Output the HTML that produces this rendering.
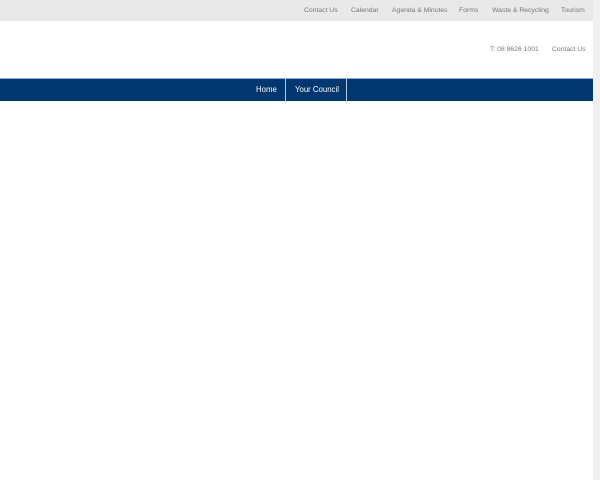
<!DOCTYPE html>
<html><head><style>
body{margin:0;width:600px;height:480px;overflow:hidden;background:#fff;font-family:"Liberation Sans",sans-serif;position:relative}
.top{position:absolute;left:0;top:0;width:593px;height:21px;background:#e9e9e9}
.t{position:absolute;top:7px;font-size:6.8px;color:#777;white-space:nowrap}
.nav{position:absolute;left:0;top:78px;width:593px;height:22px;background:#003771;border-top:1px solid #8fb0cf}
.n{position:absolute;top:6px;font-size:7.8px;color:#fff;white-space:nowrap}
.d{position:absolute;top:0;width:1px;height:22px;background:#b9cde0}
.sb{position:absolute;left:593px;top:0;width:7px;height:480px;background:#f0f0f0}
</style></head><body>
<div class="top"></div>
<div class="t" style="left:304px">Contact Us</div>
<div class="t" style="left:351px">Calendar</div>
<div class="t" style="left:392px">Agenda &amp; Minutes</div>
<div class="t" style="left:459px">Forms</div>
<div class="t" style="left:492px">Waste &amp; Recycling</div>
<div class="t" style="left:561px">Tourism</div>
<div class="t" style="left:490px;top:46px">T: 08 8626 1001</div>
<div class="t" style="left:552px;top:46px">Contact Us</div>
<div class="nav">
<div class="n" style="left:256px">Home</div>
<div class="d" style="left:285px"></div>
<div class="n" style="left:295px">Your Council</div>
<div class="d" style="left:346px"></div>
</div>
<div class="sb"></div>
</body></html>
